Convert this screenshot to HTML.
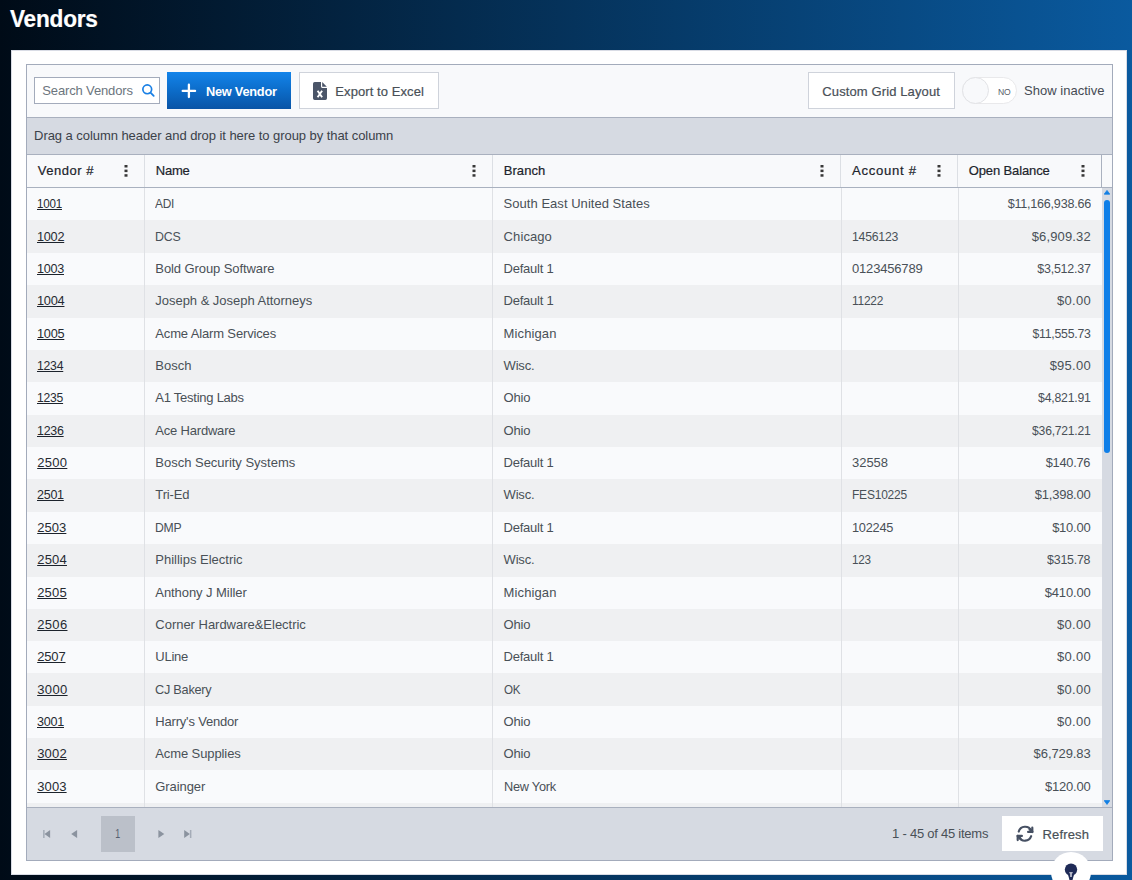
<!DOCTYPE html>
<html lang="en">
<head>
<meta charset="utf-8">
<title>Vendors</title>
<style>
*{box-sizing:border-box;margin:0;padding:0}
html,body{width:1132px;height:880px;overflow:hidden}
body{position:relative;font-family:"Liberation Sans",Arial,sans-serif;font-size:13px;color:#495057;
 background:linear-gradient(90deg,#000b17 0%,#0a5a9f 100%)}
span{white-space:pre}
.title{position:absolute;left:10px;top:4px;height:30px;line-height:30px;color:#fff;font-weight:700;font-size:23.8px}
.panel{position:absolute;left:11px;top:50px;width:1116px;height:825px;background:#fff;border:1px solid #d9dce5}
.grid{position:absolute;left:26px;top:64px;width:1087px;height:797px;border:1px solid #a3abbb;background:#f8f9fb;overflow:hidden}
.toolbar{position:absolute;left:0;top:0;width:1085px;height:53px;border-bottom:1px solid #a9b0be;background:#f8f9fb}
.search{position:absolute;left:7px;top:12px;width:126px;height:27px;border:1px solid #a3abbb;background:#fff;line-height:25px;padding-left:7.3px;color:#6c757d}
.search svg{position:absolute;left:104px;top:3px}
.btn{position:absolute;top:7px;height:37px;line-height:37px;border:1px solid #cfd3db;background:#fff;color:#495057}
.btn.primary{left:140px;width:124px;border:0;color:#fff;background:linear-gradient(180deg,#1384ea 0%,#0c6cc9 50%,#0954a6 100%)}
.btn .lbl{position:absolute;top:0;white-space:nowrap}
.switch{position:absolute;left:935px;top:12px;width:55px;height:27px;border-radius:14px;background:#fff;border:1px solid #e9e9eb}
.switch i{position:absolute;left:-1px;top:-1px;width:27px;height:27px;border-radius:50%;background:#f8f9fb;border:1px solid #e2e3e6}
.switch b{position:absolute;left:34.8px;top:0;line-height:26px;font-weight:400;color:#5a5f6a}
.showin{position:absolute;left:997px;top:7px;line-height:37px;color:#454b54}
.group{position:absolute;left:0;top:53px;width:1085px;height:37px;border-bottom:1px solid #a9b0be;background:#d6dae2;line-height:35px;padding-left:7.1px;color:#3b4149}
.head{position:absolute;left:0;top:90px;width:1085px;height:33px;border-bottom:1px solid #a9b1bf;background:#f8f9fb;color:#20242b}
.head .h{position:absolute;top:0;height:32px;line-height:32px;border-right:1px solid #dcdfe4;padding-left:10.7px}
.head .h svg{position:absolute;top:9.8px;right:16px}
.body{position:absolute;left:0;top:123px;width:1075px;height:619px;overflow:hidden;background:#f8f9fb}
.row{position:absolute;left:0;height:32px;width:1075px;background:#f9fafc}
.row.alt{background:#eff0f2}
.c{position:absolute;top:0;height:100%;line-height:31.6px;padding-left:10.7px;border-left:1px solid #dfe1e5;white-space:nowrap;overflow:hidden}
.c1{left:0;width:117px;border-left:0;padding-left:10.2px}
.c2{left:117px;width:348px;padding-left:10.3px}
.c3{left:465px;width:349px;padding-left:10.6px}
.c4{left:814px;width:117px;padding-left:10px}
.c5{left:931px;width:144px;text-align:right;padding-right:11.3px}
.c a{color:#262a31}
.c a span{text-decoration:underline;text-decoration-thickness:1px;text-underline-offset:0.5px;text-decoration-color:#1c232c}
.sbar{position:absolute;left:1075px;top:123px;width:10px;height:619px;background:#d6dae2}
.sbar .thumb{position:absolute;left:2px;top:12px;width:6px;height:253px;border-radius:3px;background:#0f7fe8}
.sbar svg{position:absolute;left:2px}
.pager{position:absolute;left:0;top:742px;width:1085px;height:53px;border-top:1px solid #a9b0be;background:#d6dae2}
.pager .pg{position:absolute;left:74px;top:8px;width:34px;height:36px;background:#bbc0c9;color:#555e6e;text-align:center;line-height:35px}
.pager svg.nav{position:absolute;top:22.3px}
.pager .info{position:absolute;right:123.6px;top:9px;line-height:34px;color:#495057}
.pager .refresh{position:absolute;left:975px;top:8px;width:101px;height:35px;background:#fff;line-height:35px;color:#495057}
.pager .refresh svg{position:absolute;left:14px;top:9px}
.pager .refresh .lbl{position:absolute;left:40.6px;top:0.5px}
.fab{position:absolute;left:1051px;top:852px;width:40px;height:40px;border-radius:50%;background:#fff}
.fab svg{position:absolute;left:12px;top:10px}

</style>
</head>
<body>
<div class="title"><span style="font-size:23.8px;font-weight:700;letter-spacing:-0.25px;margin-right:0.25px;display:inline-block;transform:scaleX(0.9511);transform-origin:0 50%;-webkit-text-stroke:0.2px">Vendors</span></div>
<div class="panel"></div>
<div class="grid">
  <div class="toolbar">
    <div class="search"><span style="font-size:13.0px;font-weight:400;letter-spacing:-0.143px;margin-right:0.143px">Search Vendors</span>
      <svg width="20" height="20" viewBox="0 0 20 20"><circle cx="8.25" cy="8.35" r="4.4" fill="none" stroke="#1a80e5" stroke-width="1.7"/><path d="M11.5 11.6 L14.7 14.8" stroke="#1a80e5" stroke-width="1.8" stroke-linecap="round"/></svg>
    </div>
    <div class="btn primary">
      <svg style="position:absolute;left:14px;top:11px" width="16" height="16" viewBox="0 0 16 16"><path d="M7.9 1.7 V14.1 M1.7 7.9 H14.1" stroke="#fff" stroke-width="2.3" stroke-linecap="round"/></svg>
      <span class="lbl" style="left:39px;top:1px"><span style="font-size:13.0px;font-weight:700;letter-spacing:-0.25px;margin-right:0.25px;display:inline-block;transform:scaleX(0.9835);transform-origin:0 50%">New Vendor</span></span>
    </div>
    <div class="btn" style="left:272px;width:140px">
      <svg style="position:absolute;left:13px;top:9px" width="14" height="18" viewBox="0 0 14 18"><path d="M1.7 0 H8 V4.6 a1.3 1.3 0 0 0 1.3 1.3 H14 V16.3 a1.7 1.7 0 0 1 -1.7 1.7 H1.7 a1.7 1.7 0 0 1 -1.7 -1.7 V1.7 a1.7 1.7 0 0 1 1.7 -1.7 Z" fill="#4b5568"/><path d="M9.2 0.1 L13.8 4.7 H9.2 Z" fill="#4b5568"/><path d="M4.6 8.7 L9.1 15.3 M9.1 8.7 L4.6 15.3" stroke="#fff" stroke-width="1.9"/></svg>
      <span class="lbl" style="left:35.3px"><span style="font-size:13.0px;font-weight:400;letter-spacing:0.083px;margin-right:-0.083px;-webkit-text-stroke:0.2px">Export to Excel</span></span>
    </div>
    <div class="btn" style="left:781px;width:147px"><span class="lbl" style="left:13.3px"><span style="font-size:13.0px;font-weight:400;letter-spacing:0.117px;margin-right:-0.117px;-webkit-text-stroke:0.2px">Custom Grid Layout</span></span></div>
    <div class="switch"><i></i><b><span style="font-size:8.8px;font-weight:400;letter-spacing:-0.25px;margin-right:0.25px;display:inline-block;transform:scaleX(0.9783);transform-origin:0 50%">NO</span></b></div>
    <div class="showin"><span style="font-size:13.0px;font-weight:400;letter-spacing:0.025px;margin-right:-0.025px">Show inactive</span></div>
  </div>
  <div class="group"><span style="font-size:13.0px;font-weight:400;letter-spacing:-0.059px;margin-right:0.059px">Drag a column header and drop it here to group by that column</span></div>
  <div class="head">
    <div class="h" style="left:0;width:118px"><span style="font-size:13.0px;font-weight:400;letter-spacing:0.536px;margin-right:-0.536px;-webkit-text-stroke:0.2px">Vendor #</span><svg width="4" height="12" viewBox="0 0 4 12"><rect x="0.5" y="0" width="3" height="2.5" fill="#383838"/><rect x="0.5" y="4.6" width="3" height="2.5" fill="#383838"/><rect x="0.5" y="9.2" width="3" height="2.5" fill="#383838"/></svg></div>
    <div class="h" style="left:118px;width:348px"><span style="font-size:13.0px;font-weight:400;letter-spacing:-0.188px;margin-right:0.188px;-webkit-text-stroke:0.2px">Name</span><svg width="4" height="12" viewBox="0 0 4 12"><rect x="0.5" y="0" width="3" height="2.5" fill="#383838"/><rect x="0.5" y="4.6" width="3" height="2.5" fill="#383838"/><rect x="0.5" y="9.2" width="3" height="2.5" fill="#383838"/></svg></div>
    <div class="h" style="left:466px;width:348px"><span style="font-size:13.0px;font-weight:400;letter-spacing:0.078px;margin-right:-0.078px;-webkit-text-stroke:0.2px">Branch</span><svg width="4" height="12" viewBox="0 0 4 12"><rect x="0.5" y="0" width="3" height="2.5" fill="#383838"/><rect x="0.5" y="4.6" width="3" height="2.5" fill="#383838"/><rect x="0.5" y="9.2" width="3" height="2.5" fill="#383838"/></svg></div>
    <div class="h" style="left:814px;width:117px"><span style="font-size:13.0px;font-weight:400;letter-spacing:0.7px;margin-right:-0.7px;display:inline-block;transform:scaleX(1.0093);transform-origin:0 50%;-webkit-text-stroke:0.2px">Account #</span><svg width="4" height="12" viewBox="0 0 4 12"><rect x="0.5" y="0" width="3" height="2.5" fill="#383838"/><rect x="0.5" y="4.6" width="3" height="2.5" fill="#383838"/><rect x="0.5" y="9.2" width="3" height="2.5" fill="#383838"/></svg></div>
    <div class="h" style="left:931px;width:144px;border-right-color:#aab1bf"><span style="font-size:13.0px;font-weight:400;letter-spacing:-0.116px;margin-right:0.116px;-webkit-text-stroke:0.2px">Open Balance</span><svg width="4" height="12" viewBox="0 0 4 12"><rect x="0.5" y="0" width="3" height="2.5" fill="#383838"/><rect x="0.5" y="4.6" width="3" height="2.5" fill="#383838"/><rect x="0.5" y="9.2" width="3" height="2.5" fill="#383838"/></svg></div>
  </div>
  <div class="body">
<div class="row" style="top:0px;height:32px"><div class="c c1"><a><span style="font-size:13.0px;font-weight:400;letter-spacing:-0.25px;margin-right:0.25px;display:inline-block;transform:scaleX(0.8941);transform-origin:0 50%">1001</span></a></div><div class="c c2"><span style="font-size:13.0px;font-weight:400;letter-spacing:-0.25px;margin-right:0.25px;display:inline-block;transform:scaleX(0.9159);transform-origin:0 50%">ADI</span></div><div class="c c3"><span style="font-size:13.0px;font-weight:400;letter-spacing:0.035px;margin-right:-0.035px">South East United States</span></div><div class="c c4"></div><div class="c c5"><span style="font-size:13.0px;font-weight:400;letter-spacing:-0.25px;margin-right:0.25px;display:inline-block;transform:scaleX(0.9677);transform-origin:100% 50%">$11,166,938.66</span></div></div>
<div class="row alt" style="top:32px;height:33px"><div class="c c1" style="padding-top:1px"><a><span style="font-size:13.0px;font-weight:400;letter-spacing:-0.25px;margin-right:0.25px;display:inline-block;transform:scaleX(0.9750);transform-origin:0 50%">1002</span></a></div><div class="c c2" style="padding-top:1px"><span style="font-size:13.0px;font-weight:400;letter-spacing:-0.25px;margin-right:0.25px;display:inline-block;transform:scaleX(0.9507);transform-origin:0 50%">DCS</span></div><div class="c c3" style="padding-top:1px"><span style="font-size:13.0px;font-weight:400;letter-spacing:0.094px;margin-right:-0.094px">Chicago</span></div><div class="c c4" style="padding-top:1px"><span style="font-size:13.0px;font-weight:400;letter-spacing:-0.25px;margin-right:0.25px;display:inline-block;transform:scaleX(0.9424);transform-origin:0 50%">1456123</span></div><div class="c c5" style="padding-top:1px"><span style="font-size:13.0px;font-weight:400;letter-spacing:0.143px;margin-right:-0.143px">$6,909.32</span></div></div>
<div class="row" style="top:65px;height:32px"><div class="c c1"><a><span style="font-size:13.0px;font-weight:400;letter-spacing:-0.25px;margin-right:0.25px;display:inline-block;transform:scaleX(0.9673);transform-origin:0 50%">1003</span></a></div><div class="c c2"><span style="font-size:13.0px;font-weight:400;letter-spacing:-0.089px;margin-right:0.089px">Bold Group Software</span></div><div class="c c3"><span style="font-size:13.0px;font-weight:400;letter-spacing:-0.25px;margin-right:0.25px">Default 1</span></div><div class="c c4"><span style="font-size:13.0px;font-weight:400;letter-spacing:-0.179px;margin-right:0.179px">0123456789</span></div><div class="c c5"><span style="font-size:13.0px;font-weight:400;letter-spacing:-0.25px;margin-right:0.25px;display:inline-block;transform:scaleX(0.9594);transform-origin:100% 50%">$3,512.37</span></div></div>
<div class="row alt" style="top:97px;height:33px"><div class="c c1"><a><span style="font-size:13.0px;font-weight:400;letter-spacing:-0.25px;margin-right:0.25px;display:inline-block;transform:scaleX(0.9834);transform-origin:0 50%">1004</span></a></div><div class="c c2"><span style="font-size:13.0px;font-weight:400;letter-spacing:-0.027px;margin-right:0.027px">Joseph &amp; Joseph Attorneys</span></div><div class="c c3"><span style="font-size:13.0px;font-weight:400;letter-spacing:-0.25px;margin-right:0.25px">Default 1</span></div><div class="c c4"><span style="font-size:13.0px;font-weight:400;letter-spacing:-0.25px;margin-right:0.25px;display:inline-block;transform:scaleX(0.9173);transform-origin:0 50%">11222</span></div><div class="c c5"><span style="font-size:13.0px;font-weight:400;letter-spacing:0.281px;margin-right:-0.281px">$0.00</span></div></div>
<div class="row" style="top:130px;height:32px"><div class="c c1"><a><span style="font-size:13.0px;font-weight:400;letter-spacing:-0.25px;margin-right:0.25px;display:inline-block;transform:scaleX(0.9784);transform-origin:0 50%">1005</span></a></div><div class="c c2"><span style="font-size:13.0px;font-weight:400;letter-spacing:-0.148px;margin-right:0.148px">Acme Alarm Services</span></div><div class="c c3"><span style="font-size:13.0px;font-weight:400;letter-spacing:0.118px;margin-right:-0.118px">Michigan</span></div><div class="c c4"></div><div class="c c5"><span style="font-size:13.0px;font-weight:400;letter-spacing:-0.25px;margin-right:0.25px;display:inline-block;transform:scaleX(0.9439);transform-origin:100% 50%">$11,555.73</span></div></div>
<div class="row alt" style="top:162px;height:32px"><div class="c c1"><a><span style="font-size:13.0px;font-weight:400;letter-spacing:-0.25px;margin-right:0.25px;display:inline-block;transform:scaleX(0.9401);transform-origin:0 50%">1234</span></a></div><div class="c c2"><span style="font-size:13.0px;font-weight:400;letter-spacing:0.008px;margin-right:-0.008px">Bosch</span></div><div class="c c3"><span style="font-size:13.0px;font-weight:400;letter-spacing:-0.195px;margin-right:0.195px">Wisc.</span></div><div class="c c4"></div><div class="c c5"><span style="font-size:13.0px;font-weight:400;letter-spacing:0.259px;margin-right:-0.259px">$95.00</span></div></div>
<div class="row" style="top:194px;height:33px"><div class="c c1"><a><span style="font-size:13.0px;font-weight:400;letter-spacing:-0.25px;margin-right:0.25px;display:inline-block;transform:scaleX(0.9346);transform-origin:0 50%">1235</span></a></div><div class="c c2"><span style="font-size:13.0px;font-weight:400;letter-spacing:-0.25px;margin-right:0.25px">A1 Testing Labs</span></div><div class="c c3"><span style="font-size:13.0px;font-weight:400;letter-spacing:-0.161px;margin-right:0.161px">Ohio</span></div><div class="c c4"></div><div class="c c5"><span style="font-size:13.0px;font-weight:400;letter-spacing:-0.25px;margin-right:0.25px;display:inline-block;transform:scaleX(0.9446);transform-origin:100% 50%">$4,821.91</span></div></div>
<div class="row alt" style="top:227px;height:32px"><div class="c c1"><a><span style="font-size:13.0px;font-weight:400;letter-spacing:-0.25px;margin-right:0.25px;display:inline-block;transform:scaleX(0.9540);transform-origin:0 50%">1236</span></a></div><div class="c c2"><span style="font-size:13.0px;font-weight:400;letter-spacing:-0.197px;margin-right:0.197px">Ace Hardware</span></div><div class="c c3"><span style="font-size:13.0px;font-weight:400;letter-spacing:-0.161px;margin-right:0.161px">Ohio</span></div><div class="c c4"></div><div class="c c5"><span style="font-size:13.0px;font-weight:400;letter-spacing:-0.25px;margin-right:0.25px;display:inline-block;transform:scaleX(0.9348);transform-origin:100% 50%">$36,721.21</span></div></div>
<div class="row" style="top:259px;height:32px"><div class="c c1"><a><span style="font-size:13.0px;font-weight:400;letter-spacing:0.302px;margin-right:-0.302px">2500</span></a></div><div class="c c2"><span style="font-size:13.0px;font-weight:400;letter-spacing:-0.011px;margin-right:0.011px">Bosch Security Systems</span></div><div class="c c3"><span style="font-size:13.0px;font-weight:400;letter-spacing:-0.25px;margin-right:0.25px">Default 1</span></div><div class="c c4"><span style="font-size:13.0px;font-weight:400;letter-spacing:-0.039px;margin-right:0.039px">32558</span></div><div class="c c5"><span style="font-size:13.0px;font-weight:400;letter-spacing:-0.25px;margin-right:0.25px;display:inline-block;transform:scaleX(0.9839);transform-origin:100% 50%">$140.76</span></div></div>
<div class="row alt" style="top:291px;height:33px"><div class="c c1"><a><span style="font-size:13.0px;font-weight:400;letter-spacing:-0.25px;margin-right:0.25px;display:inline-block;transform:scaleX(0.9601);transform-origin:0 50%">2501</span></a></div><div class="c c2"><span style="font-size:13.0px;font-weight:400;letter-spacing:-0.122px;margin-right:0.122px">Tri-Ed</span></div><div class="c c3"><span style="font-size:13.0px;font-weight:400;letter-spacing:-0.195px;margin-right:0.195px">Wisc.</span></div><div class="c c4"><span style="font-size:13.0px;font-weight:400;letter-spacing:-0.25px;margin-right:0.25px;display:inline-block;transform:scaleX(0.9243);transform-origin:0 50%">FES10225</span></div><div class="c c5"><span style="font-size:13.0px;font-weight:400;letter-spacing:-0.25px;margin-right:0.25px">$1,398.00</span></div></div>
<div class="row" style="top:324px;height:32px"><div class="c c1"><a><span style="font-size:13.0px;font-weight:400;letter-spacing:0.062px;margin-right:-0.062px">2503</span></a></div><div class="c c2"><span style="font-size:13.0px;font-weight:400;letter-spacing:-0.25px;margin-right:0.25px;display:inline-block;transform:scaleX(0.9389);transform-origin:0 50%">DMP</span></div><div class="c c3"><span style="font-size:13.0px;font-weight:400;letter-spacing:-0.25px;margin-right:0.25px">Default 1</span></div><div class="c c4"><span style="font-size:13.0px;font-weight:400;letter-spacing:-0.25px;margin-right:0.25px;display:inline-block;transform:scaleX(0.9826);transform-origin:0 50%">102245</span></div><div class="c c5"><span style="font-size:13.0px;font-weight:400;letter-spacing:-0.237px;margin-right:0.237px">$10.00</span></div></div>
<div class="row alt" style="top:356px;height:33px"><div class="c c1"><a><span style="font-size:13.0px;font-weight:400;letter-spacing:0.214px;margin-right:-0.214px">2504</span></a></div><div class="c c2"><span style="font-size:13.0px;font-weight:400;letter-spacing:-0.006px;margin-right:0.006px">Phillips Electric</span></div><div class="c c3"><span style="font-size:13.0px;font-weight:400;letter-spacing:-0.195px;margin-right:0.195px">Wisc.</span></div><div class="c c4"><span style="font-size:13.0px;font-weight:400;letter-spacing:-0.25px;margin-right:0.25px;display:inline-block;transform:scaleX(0.8990);transform-origin:0 50%">123</span></div><div class="c c5"><span style="font-size:13.0px;font-weight:400;letter-spacing:-0.25px;margin-right:0.25px;display:inline-block;transform:scaleX(0.9540);transform-origin:100% 50%">$315.78</span></div></div>
<div class="row" style="top:389px;height:32px"><div class="c c1"><a><span style="font-size:13.0px;font-weight:400;letter-spacing:0.167px;margin-right:-0.167px">2505</span></a></div><div class="c c2"><span style="font-size:13.0px;font-weight:400;letter-spacing:-0.066px;margin-right:0.066px">Anthony J Miller</span></div><div class="c c3"><span style="font-size:13.0px;font-weight:400;letter-spacing:0.118px;margin-right:-0.118px">Michigan</span></div><div class="c c4"></div><div class="c c5"><span style="font-size:13.0px;font-weight:400;letter-spacing:-0.167px;margin-right:0.167px">$410.00</span></div></div>
<div class="row alt" style="top:421px;height:32px"><div class="c c1"><a><span style="font-size:13.0px;font-weight:400;letter-spacing:0.344px;margin-right:-0.344px">2506</span></a></div><div class="c c2"><span style="font-size:13.0px;font-weight:400;letter-spacing:-0.019px;margin-right:0.019px">Corner Hardware&amp;Electric</span></div><div class="c c3"><span style="font-size:13.0px;font-weight:400;letter-spacing:-0.161px;margin-right:0.161px">Ohio</span></div><div class="c c4"></div><div class="c c5"><span style="font-size:13.0px;font-weight:400;letter-spacing:0.281px;margin-right:-0.281px">$0.00</span></div></div>
<div class="row" style="top:453px;height:32px"><div class="c c1"><a><span style="font-size:13.0px;font-weight:400;letter-spacing:-0.151px;margin-right:0.151px">2507</span></a></div><div class="c c2"><span style="font-size:13.0px;font-weight:400;letter-spacing:-0.238px;margin-right:0.238px">ULine</span></div><div class="c c3"><span style="font-size:13.0px;font-weight:400;letter-spacing:-0.25px;margin-right:0.25px">Default 1</span></div><div class="c c4"></div><div class="c c5"><span style="font-size:13.0px;font-weight:400;letter-spacing:0.281px;margin-right:-0.281px">$0.00</span></div></div>
<div class="row alt" style="top:485px;height:33px"><div class="c c1" style="padding-top:1px"><a><span style="font-size:13.0px;font-weight:400;letter-spacing:0.365px;margin-right:-0.365px">3000</span></a></div><div class="c c2" style="padding-top:1px"><span style="font-size:13.0px;font-weight:400;letter-spacing:-0.25px;margin-right:0.25px;display:inline-block;transform:scaleX(0.9776);transform-origin:0 50%">CJ Bakery</span></div><div class="c c3" style="padding-top:1px"><span style="font-size:13.0px;font-weight:400;letter-spacing:-0.25px;margin-right:0.25px;display:inline-block;transform:scaleX(0.8947);transform-origin:0 50%">OK</span></div><div class="c c4" style="padding-top:1px"></div><div class="c c5" style="padding-top:1px"><span style="font-size:13.0px;font-weight:400;letter-spacing:0.281px;margin-right:-0.281px">$0.00</span></div></div>
<div class="row" style="top:518px;height:32px"><div class="c c1"><a><span style="font-size:13.0px;font-weight:400;letter-spacing:-0.25px;margin-right:0.25px;display:inline-block;transform:scaleX(0.9673);transform-origin:0 50%">3001</span></a></div><div class="c c2"><span style="font-size:13.0px;font-weight:400;letter-spacing:-0.192px;margin-right:0.192px">Harry&#x27;s Vendor</span></div><div class="c c3"><span style="font-size:13.0px;font-weight:400;letter-spacing:-0.161px;margin-right:0.161px">Ohio</span></div><div class="c c4"></div><div class="c c5"><span style="font-size:13.0px;font-weight:400;letter-spacing:0.281px;margin-right:-0.281px">$0.00</span></div></div>
<div class="row alt" style="top:550px;height:32px"><div class="c c1"><a><span style="font-size:13.0px;font-weight:400;letter-spacing:0.198px;margin-right:-0.198px">3002</span></a></div><div class="c c2"><span style="font-size:13.0px;font-weight:400;letter-spacing:-0.103px;margin-right:0.103px">Acme Supplies</span></div><div class="c c3"><span style="font-size:13.0px;font-weight:400;letter-spacing:-0.161px;margin-right:0.161px">Ohio</span></div><div class="c c4"></div><div class="c c5"><span style="font-size:13.0px;font-weight:400;letter-spacing:-0.092px;margin-right:0.092px">$6,729.83</span></div></div>
<div class="row" style="top:582px;height:33px"><div class="c c1" style="padding-top:1px"><a><span style="font-size:13.0px;font-weight:400;letter-spacing:0.125px;margin-right:-0.125px">3003</span></a></div><div class="c c2" style="padding-top:1px"><span style="font-size:13.0px;font-weight:400;letter-spacing:-0.089px;margin-right:0.089px">Grainger</span></div><div class="c c3" style="padding-top:1px"><span style="font-size:13.0px;font-weight:400;letter-spacing:-0.25px;margin-right:0.25px;display:inline-block;transform:scaleX(0.9809);transform-origin:0 50%">New York</span></div><div class="c c4" style="padding-top:1px"></div><div class="c c5" style="padding-top:1px"><span style="font-size:13.0px;font-weight:400;letter-spacing:-0.208px;margin-right:0.208px">$120.00</span></div></div>
<div class="row alt" style="top:615px;height:33px"><div class="c c1" style="padding-top:1px"></div><div class="c c2" style="padding-top:1px"></div><div class="c c3" style="padding-top:1px"></div><div class="c c4" style="padding-top:1px"></div><div class="c c5" style="padding-top:1px"></div></div>
  </div>
  <div class="sbar">
    <svg style="top:2px" width="6" height="5" viewBox="0 0 6 5"><path d="M3 0.4 L5.8 4.2 H0.2 Z" fill="#1380e4" stroke="#1380e4" stroke-width="0.8" stroke-linejoin="round"/></svg>
    <div class="thumb"></div>
    <svg style="top:612px" width="6" height="5" viewBox="0 0 6 5"><path d="M0.2 0.6 H5.8 L3 4.4 Z" fill="#1380e4" stroke="#1380e4" stroke-width="0.8" stroke-linejoin="round"/></svg>
  </div>
  <div class="pager">
    <svg class="nav" style="left:16px" width="8" height="8" viewBox="0 0 8 8"><path d="M0.1 0 H1.6 V8 H0.1 Z" fill="#a4abb7"/><path d="M7.1 0 V8 L1.5 4 Z" fill="#8b939f"/></svg>
    <svg class="nav" style="left:44px" width="7" height="8" viewBox="0 0 7 8"><path d="M6.1 0 V8 L0.2 4 Z" fill="#8b939f"/></svg>
    <div class="pg"><span style="font-size:13.0px;font-weight:400;display:inline-block;transform:scaleX(0.6803);transform-origin:50% 50%">1</span></div>
    <svg class="nav" style="left:130.5px" width="7" height="8" viewBox="0 0 7 8"><path d="M0.4 0 V8 L6.3 4 Z" fill="#8b939f"/></svg>
    <svg class="nav" style="left:157px" width="8" height="8" viewBox="0 0 8 8"><path d="M5.9 0 H7.4 V8 H5.9 Z" fill="#a4abb7"/><path d="M0.2 0 V8 L5.9 4 Z" fill="#8b939f"/></svg>
    <div class="info"><span style="font-size:13.0px;font-weight:400;letter-spacing:-0.244px;margin-right:0.244px">1 - 45 of 45 items</span></div>
    <div class="refresh">
      <svg width="18" height="18" viewBox="0 0 18 18"><g fill="none" stroke="#465063" stroke-width="2.1" stroke-linecap="round" stroke-linejoin="round"><path d="M2.7 6.6 A6.7 6.7 0 0 1 15.2 5.6"/><path d="M2.9 12.0 A6.7 6.7 0 0 0 15.2 11.2"/></g><g fill="none" stroke="#465063" stroke-width="2.2" stroke-linejoin="round" stroke-linecap="round"><path d="M16.3 2.7 V6.9 H12.1"/><path d="M1.7 15.1 V10.9 H5.9"/></g><path d="M16.3 6.9 L13.6 4.2 M1.7 10.9 L4.4 13.6" stroke="#465063" stroke-width="2.4" stroke-linecap="round"/></svg>
      <span class="lbl"><span style="font-size:13.0px;font-weight:400;letter-spacing:0.143px;margin-right:-0.143px;-webkit-text-stroke:0.2px">Refresh</span></span>
    </div>
  </div>
</div>
<div class="fab"><svg width="16" height="20" viewBox="0 0 16 20"><circle cx="8" cy="7.6" r="6.2" fill="#1f2b57"/><path d="M4.6 11 L11.4 11 L9 20 H7 Z" fill="#1f2b57"/><path d="M6.3 10.2 H9.7 V11.3 H8.7 V15 H7.3 V11.3 H6.3 Z" fill="#e3e5ec"/></svg></div>

</body>
</html>
